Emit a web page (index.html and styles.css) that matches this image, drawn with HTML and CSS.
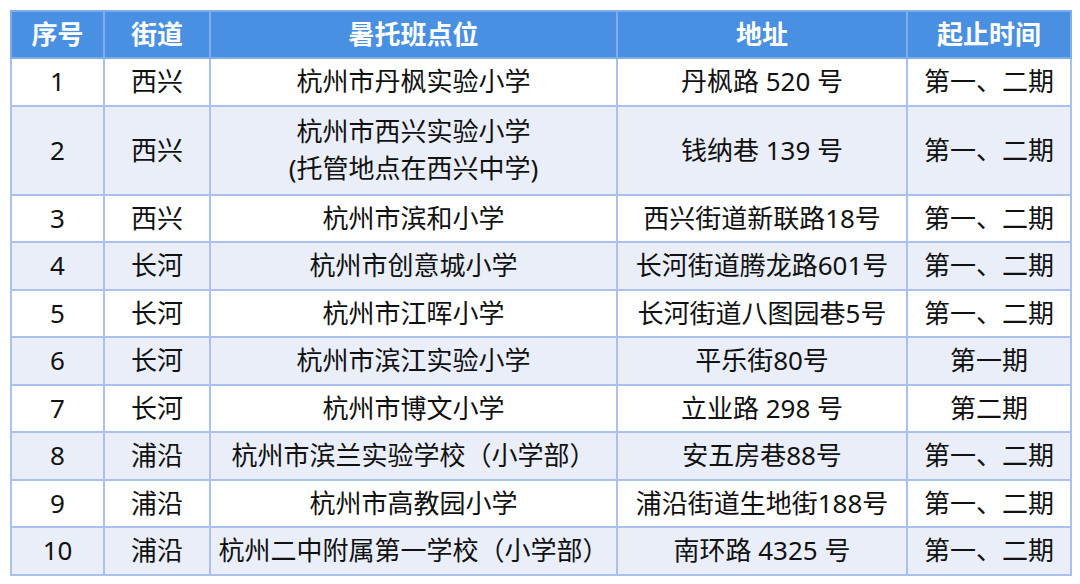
FILE: index.html
```html
<!DOCTYPE html>
<html lang="zh-CN">
<head>
<meta charset="utf-8">
<title>暑托班点位</title>
<link rel="stylesheet" href="styles.css">
</head>
<body>
<table class="sched">
  <colgroup>
    <col class="c1"><col class="c2"><col class="c3"><col class="c4"><col class="c5">
  </colgroup>
  <thead>
    <tr class="head"><th>序号</th><th>街道</th><th>暑托班点位</th><th>地址</th><th>起止时间</th></tr>
  </thead>
  <tbody>
    <tr class="odd"><td>1</td><td>西兴</td><td>杭州市丹枫实验小学</td><td>丹枫路 520 号</td><td>第一、二期</td></tr>
    <tr class="even tall"><td>2</td><td>西兴</td><td>杭州市西兴实验小学<br>(托管地点在西兴中学)</td><td>钱纳巷 139 号</td><td>第一、二期</td></tr>
    <tr class="odd"><td>3</td><td>西兴</td><td>杭州市滨和小学</td><td>西兴街道新联路18号</td><td>第一、二期</td></tr>
    <tr class="even"><td>4</td><td>长河</td><td>杭州市创意城小学</td><td>长河街道腾龙路601号</td><td>第一、二期</td></tr>
    <tr class="odd"><td>5</td><td>长河</td><td>杭州市江晖小学</td><td>长河街道八图园巷5号</td><td>第一、二期</td></tr>
    <tr class="even"><td>6</td><td>长河</td><td>杭州市滨江实验小学</td><td>平乐街80号</td><td>第一期</td></tr>
    <tr class="odd"><td>7</td><td>长河</td><td>杭州市博文小学</td><td>立业路 298 号</td><td>第二期</td></tr>
    <tr class="even"><td>8</td><td>浦沿</td><td>杭州市滨兰实验学校（小学部）</td><td>安五房巷88号</td><td>第一、二期</td></tr>
    <tr class="odd"><td>9</td><td>浦沿</td><td>杭州市高教园小学</td><td>浦沿街道生地街188号</td><td>第一、二期</td></tr>
    <tr class="even"><td>10</td><td>浦沿</td><td>杭州二中附属第一学校（小学部）</td><td>南环路 4325 号</td><td>第一、二期</td></tr>
  </tbody>
</table>
</body>
</html>
```

FILE: styles.css
```css
html, body {
  margin: 0;
  padding: 0;
  background: #ffffff;
}
body {
  padding: 10px 0 0 10px;
  font-family: "Noto Sans", "Noto Sans CJK SC", sans-serif;
}
.sched {
  width: 1060px;
  table-layout: fixed;
  border-collapse: collapse;
  border: 2px solid #4a80d6;
  font-size: 26px;
  color: #111111;
}
.c1 { width: 93px; }
.c2 { width: 106px; }
.c3 { width: 407px; }
.c4 { width: 290px; }
.c5 { width: 164px; }
.sched th,
.sched td {
  border: 2px solid #a9c1ec;
  padding: 0;
  text-align: center;
  vertical-align: middle;
  line-height: 37px;
  white-space: nowrap;
}
.head th {
  background: #4a90e2;
  color: #ffffff;
  font-weight: 700;
  height: 45px;
  border-color: #7eaee9;
}
.odd td { background: #ffffff; height: 45.5px; }
.even td { background: #e9eef9; height: 45.5px; }
.tall td { height: 87px; }
```
